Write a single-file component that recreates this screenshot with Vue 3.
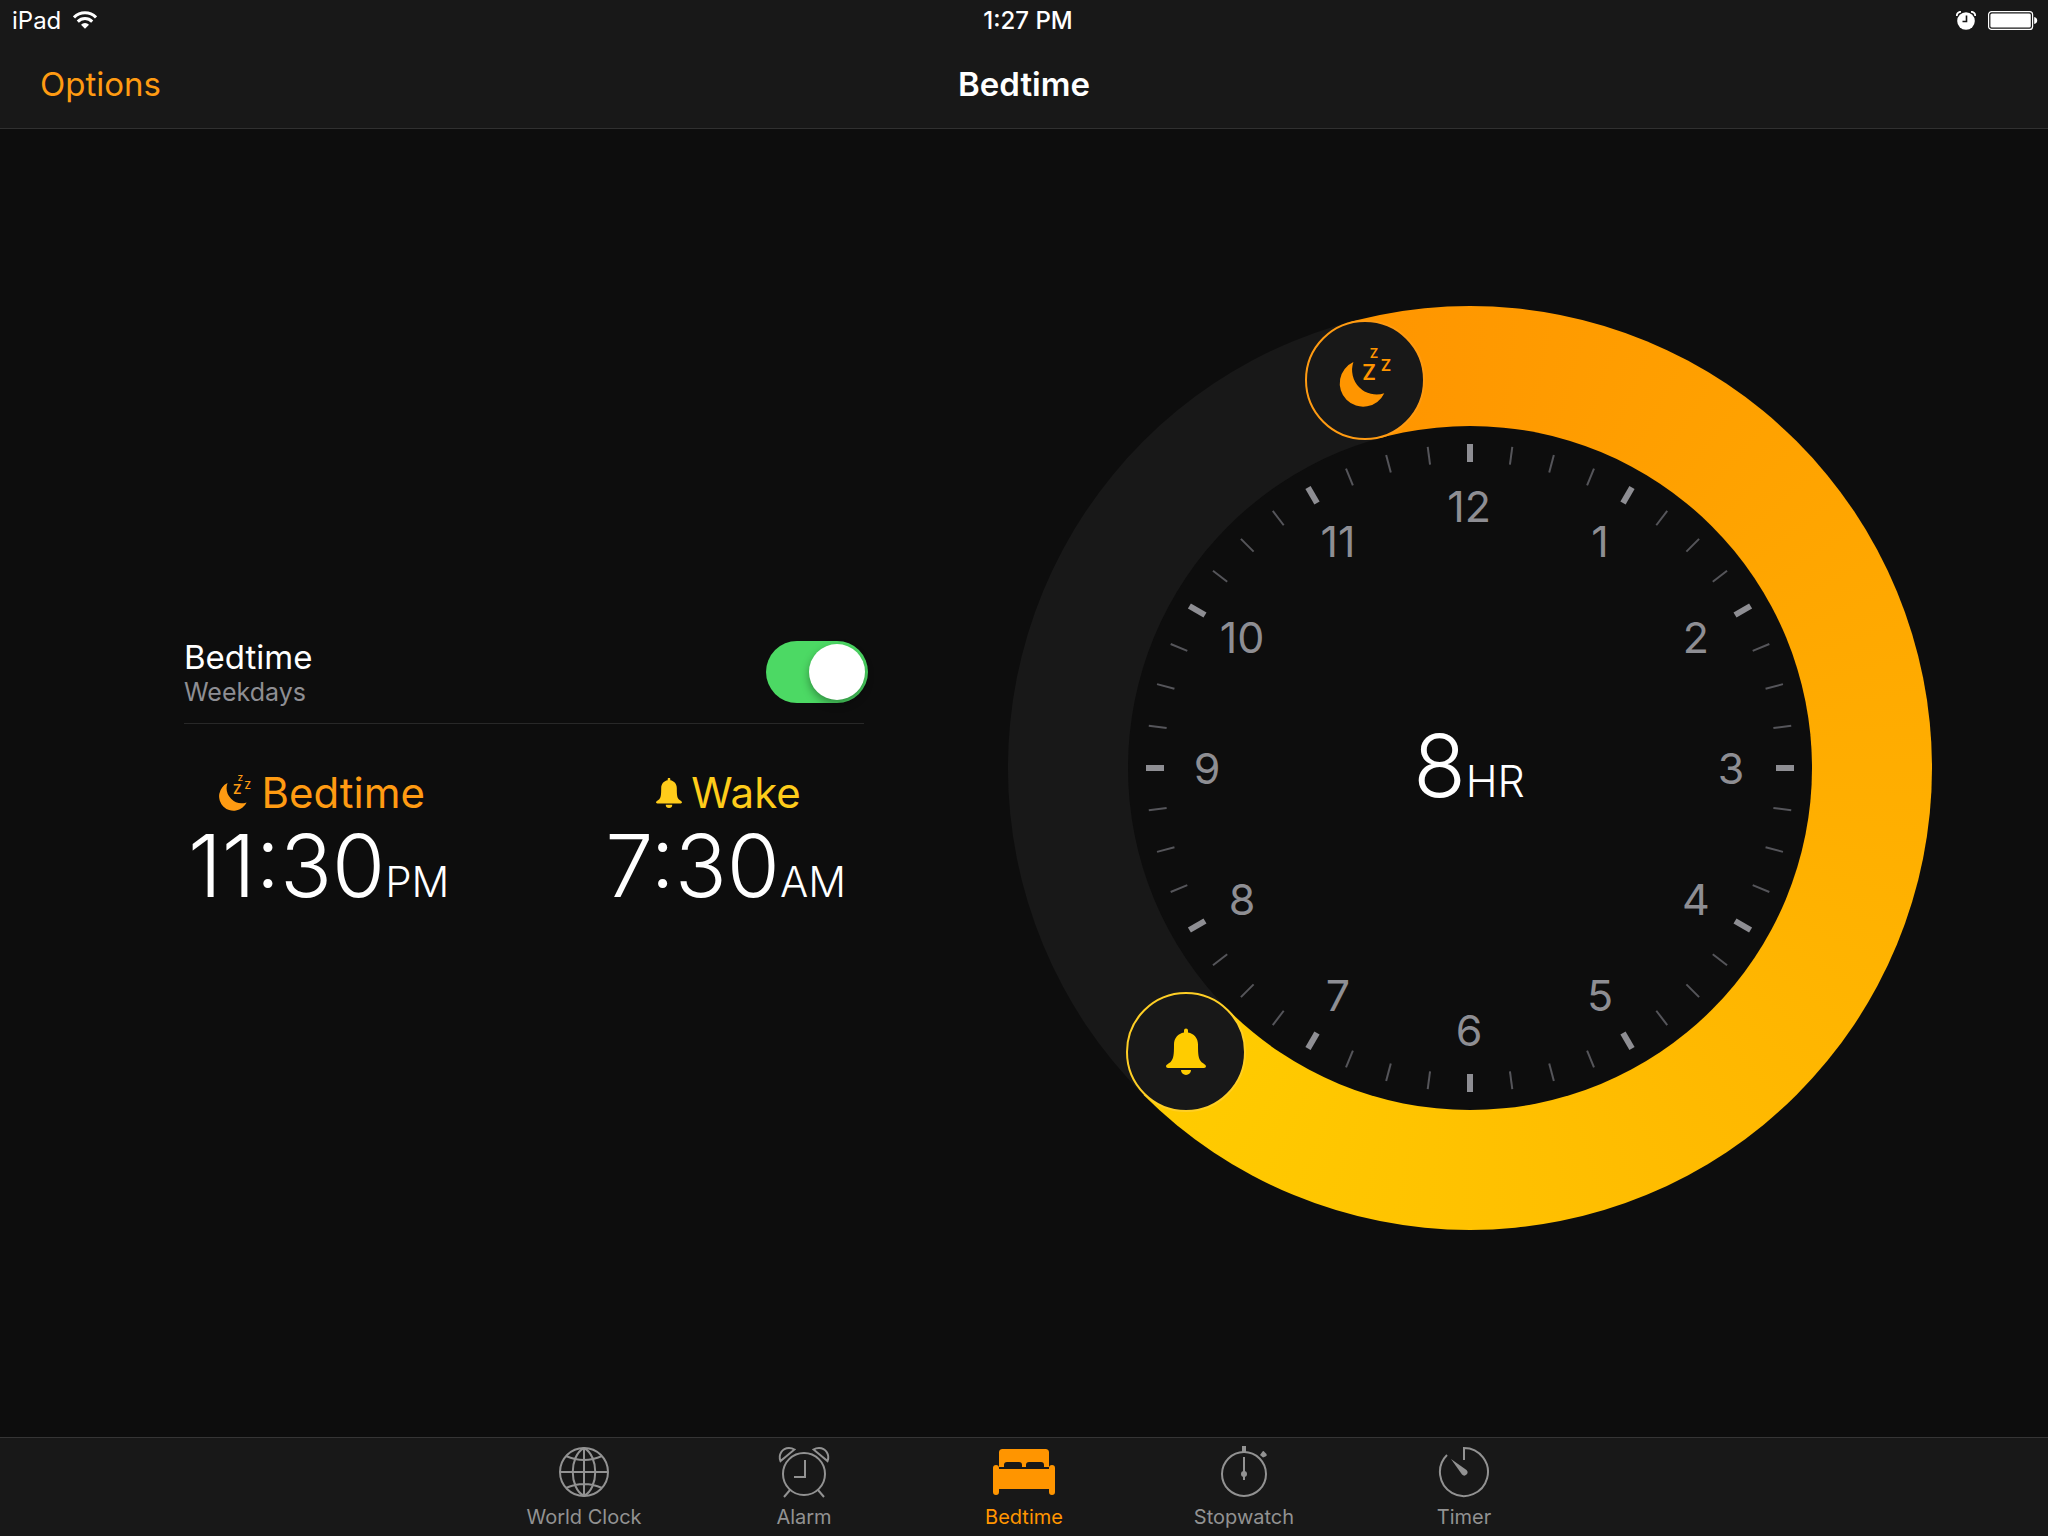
<script setup>
import { ref } from 'vue'

const enabled = ref(true)
const active = ref('bedtime')

const tabs = [
  { id: 'world', label: 'World Clock' },
  { id: 'alarm', label: 'Alarm' },
  { id: 'bedtime', label: 'Bedtime' },
  { id: 'stopwatch', label: 'Stopwatch' },
  { id: 'timer', label: 'Timer' },
]

const ticks = Array.from({ length: 48 }, (_, i) => ({ angle: i * 7.5, hour: i % 4 === 0 }))

const hours = Array.from({ length: 12 }, (_, i) => {
  const a = ((i + 1) * Math.PI) / 6
  return { n: i + 1, x: 262 * Math.sin(a) - 1, y: -262 * Math.cos(a) + 16 }
})

const moon = 'M-11.6 -18A23.4 23.4 0 1 0 19.3 13.3A24.6 24.6 0 0 1 -11.6 -18Z'
const bell =
  'M-2 -19.6V-21.4A2 2 0 0 1 2 -21.4V-19.6C8 -18.6 12 -14 12 -7.5C12 3 12.5 6.5 15 9.5C16.5 11.3 20 12.5 20 14.3Q20 16 18 16H-18Q-20 16 -20 14.3C-20 12.5 -16.5 11.3 -15 9.5C-12.5 6.5 -12 3 -12 -7.5C-12 -14 -8 -18.6 -2 -19.6ZM-5 18H5A5 5 0 0 1 -5 18Z'
</script>

<template>
  <div class="app">
    <header class="top">
      <div class="status">
        <div class="carrier">
          <span>iPad</span>
          <svg width="24" height="18" viewBox="0 0 24 18" fill="none" stroke="#fff" stroke-width="3" aria-hidden="true">
            <path d="M1 6.4A15.6 15.6 0 0 1 23 6.4" />
            <path d="M4.8 10.6A10.2 10.2 0 0 1 19.2 10.6" />
            <path d="M12 17.8L8 13.7A5.6 5.6 0 0 1 16 13.7Z" fill="#fff" stroke="none" />
          </svg>
        </div>
        <span class="clock">1:27 PM</span>
        <div class="indicators">
          <svg width="20" height="19" viewBox="0 0 20 19" aria-hidden="true">
            <circle cx="10" cy="10" r="8.8" fill="#fff" />
            <path d="M.8 5A4 4 0 0 1 5 .8M19.2 5A4 4 0 0 0 15 .8" fill="none" stroke="#fff" stroke-width="1.8" />
            <path d="M10.5 4.5V10.5H6.5" fill="none" stroke="#171717" stroke-width="1.6" />
          </svg>
          <svg width="50" height="19" viewBox="0 0 50 19" aria-hidden="true">
            <rect x=".6" y=".6" width="44" height="17.8" rx="3" fill="none" stroke="#fff" stroke-width="1.2" />
            <rect x="2.4" y="2.4" width="40.4" height="14.2" rx="1.5" fill="#fff" />
            <path d="M46.2 6Q49.2 6.6 49.2 9.5T46.2 13Z" fill="#fff" />
          </svg>
        </div>
      </div>
      <div class="bar">
        <button type="button" class="options">Options</button>
        <h1>Bedtime</h1>
        <span></span>
      </div>
    </header>

    <main class="main">
      <section class="panel">
        <div class="setting">
          <label for="bedtime-switch">
            <span class="name">Bedtime</span>
            <span class="days">Weekdays</span>
          </label>
          <input id="bedtime-switch" v-model="enabled" type="checkbox" role="switch" class="switch" />
        </div>
        <div class="times">
          <div class="time">
            <h2 class="bed">
              <svg width="34" height="38" viewBox="-27 -32 55 60" fill="currentColor" aria-hidden="true">
                <path :d="moon" />
                <g class="zs">
                  <text x="4" y="0" font-size="21">Z</text>
                  <text x="21" y="-9" font-size="16">Z</text>
                  <text x="9" y="-22" font-size="13">Z</text>
                </g>
              </svg>
              Bedtime
            </h2>
            <p>11:30<small>PM</small></p>
          </div>
          <div class="time">
            <h2 class="wake">
              <svg width="26" height="30" viewBox="-20 -23 40 46" fill="currentColor" aria-hidden="true">
                <path :d="bell" />
              </svg>
              Wake
            </h2>
            <p>7:30<small>AM</small></p>
          </div>
        </div>
      </section>

      <section class="dial" aria-label="Sleep schedule">
        <div class="ring"></div>
        <svg class="face" viewBox="-462 -462 924 924">
          <circle r="342" fill="#0d0d0d" />
          <line
            v-for="t in ticks"
            :key="t.angle"
            y1="-324"
            y2="-306"
            :class="t.hour ? 'major' : 'minor'"
            :transform="`rotate(${t.angle})`"
          />
          <text v-for="h in hours" :key="h.n" class="hour" :x="h.x" :y="h.y">{{ h.n }}</text>
          <text class="total" x="-1" y="29">8<tspan class="unit">HR</tspan></text>
          <g transform="translate(-105 -388)">
            <circle r="59" fill="#181818" stroke="#ff9b12" stroke-width="2" />
            <g fill="#ff9500">
              <path :d="moon" />
              <g class="zs">
                <text x="4" y="0" font-size="21">Z</text>
                <text x="21" y="-9" font-size="16">Z</text>
                <text x="9" y="-22" font-size="13">Z</text>
              </g>
            </g>
          </g>
          <g transform="translate(-284 284)">
            <circle r="59" fill="#181818" stroke="#ffcf25" stroke-width="2" />
            <path :d="bell" fill="#ffcc00" />
          </g>
        </svg>
      </section>
    </main>

    <nav class="tabs">
      <button
        v-for="t in tabs"
        :key="t.id"
        type="button"
        :class="['tab', { on: active === t.id }]"
        @click="active = t.id"
      >
        <svg width="64" height="54" viewBox="-32 -27 64 54" fill="none" stroke="currentColor" stroke-width="2" aria-hidden="true">
          <template v-if="t.id === 'world'">
            <circle r="24" />
            <path d="M0 -24V24M-24 0H24M0 -24C-15 -16 -15 16 0 24M0 -24C15 -16 15 16 0 24M-18 -16Q0 -8 18 -16M-18 16Q0 8 18 16" />
          </template>
          <template v-else-if="t.id === 'alarm'">
            <circle cy="2" r="21" />
            <path d="M1 -12V5H-10M-14 18L-20 25M14 18L20 25" />
            <path d="M-23.5 -11C-26 -17 -22 -24 -15 -24Q-12 -24 -9.500 -22.500ZM23.500 -11C26 -17 22 -24 15 -24Q12 -24 9.500 -22.500Z" />
          </template>
          <template v-else-if="t.id === 'bedtime'">
            <g fill="currentColor" stroke="none">
              <path d="M-25 -5V-19.500Q-25 -23 -21.500 -23H21.500Q25 -23 25 -19.500V-5H20V-7Q20 -10 17 -10H5Q2 -10 2 -7V-5H-2V-7Q-2 -10 -5 -10H-17Q-20 -10 -20 -7V-5Z" />
              <path d="M-25 -3H25V-4A3 3 0 0 1 31 -4V20A3 3 0 0 1 25 20V17H-25V20A3 3 0 0 1 -31 20V-4A3 3 0 0 1 -25 -4Z" />
            </g>
          </template>
          <template v-else-if="t.id === 'stopwatch'">
            <circle cy="2" r="22" />
            <path d="M0 -15V8" />
            <circle cy="2" r="3" fill="currentColor" stroke="none" />
            <path d="M-2 -26H2V-20H-2ZM16 -17L18.500 -20.500Q19.500 -21.500 20.500 -20L22.500 -18Q23.500 -16.500 21.500 -15.500L19 -14.500Z" fill="currentColor" stroke="none" />
          </template>
          <template v-else>
            <path d="M0 -12V-24A24 24 0 1 1 -17 -17" />
            <path d="M-13 -13L2.500 -2A3 3 0 0 1 -2 2.500Z" fill="currentColor" stroke="none" />
          </template>
        </svg>
        <span>{{ t.label }}</span>
      </button>
    </nav>
  </div>
</template>

<style>
body {
  margin: 0;
  background: #0d0d0d;
}
</style>

<style scoped>
.app {
  min-height: 100vh;
  display: flex;
  flex-direction: column;
  background: #0d0d0d;
  color: #fff;
  font-family: Inter, "Liberation Sans", sans-serif;
}

button {
  padding: 0;
  border: 0;
  background: none;
  font: inherit;
  color: inherit;
}

h1,
h2,
p {
  margin: 0;
}

.top {
  background: #181818;
  border-bottom: 1px solid #303030;
}

.status {
  display: grid;
  grid-template-columns: 1fr auto 1fr;
  align-items: center;
  height: 40px;
  padding: 0 10px 0 12px;
  font-size: 24px;
}

.carrier,
.indicators {
  display: flex;
  align-items: center;
  gap: 12px;
}

.indicators {
  justify-content: flex-end;
}

.clock {
  font-weight: 500;
  padding-left: 6px;
}

.bar {
  display: grid;
  grid-template-columns: 1fr auto 1fr;
  align-items: center;
  height: 88px;
  padding: 0 40px;
  font-size: 33px;
}

.options {
  justify-self: start;
  color: #ff9b12;
}

h1 {
  font-size: 33px;
  font-weight: 600;
}

.main {
  flex: 1;
  display: grid;
  grid-template-columns: 680fr 924fr;
  align-items: center;
  gap: 144px;
  padding: 0 116px 30px 184px;
}

.panel {
  padding-top: 16px;
}

.setting {
  display: flex;
  justify-content: space-between;
  align-items: flex-start;
  height: 82px;
  border-bottom: 1px solid #282828;
}

.setting label {
  display: flex;
  flex-direction: column;
}

.name {
  font-size: 33px;
  line-height: 32px;
}

.days {
  font-size: 25px;
  line-height: 38px;
  color: #8e8e93;
}

.switch {
  appearance: none;
  box-sizing: border-box;
  width: 102px;
  height: 62px;
  margin: 0 -4px 0 0;
  padding: 3px;
  border-radius: 31px;
  background: #39393d;
}

.switch::before {
  content: "";
  display: block;
  width: 56px;
  height: 56px;
  border-radius: 50%;
  background: #fff;
  box-shadow: 0 4px 8px rgba(0, 0, 0, 0.35);
}

.switch:checked {
  background: #4cd964;
}

.switch:checked::before {
  margin-left: 40px;
}

.times {
  display: flex;
  justify-content: space-between;
  padding: 42px 18px 0 4px;
}

.time {
  display: flex;
  flex-direction: column;
  align-items: center;
}

h2 {
  display: flex;
  align-items: center;
  gap: 9px;
  padding-left: 6px;
  font-size: 42px;
  line-height: 54px;
  font-weight: 400;
}

.bed {
  color: #ff9b12;
}

.wake {
  color: #ffcc1a;
}

.time p {
  font-size: 86px;
  line-height: 92px;
  font-weight: 300;
}

small {
  font-size: 42px;
  line-height: 42px;
}

.dial {
  display: grid;
}

.ring,
.face {
  grid-area: 1 / 1;
  width: 100%;
  aspect-ratio: 1;
}

.ring {
  border-radius: 50%;
  background: conic-gradient(from 345deg, #ff9500 0deg, #ffcc00 240deg, #181818 240deg);
}

.major {
  stroke: #8e8e93;
  stroke-width: 6px;
}

.minor {
  stroke: #55555a;
  stroke-width: 2px;
}

.hour {
  fill: #8e8e93;
  font-size: 43px;
  text-anchor: middle;
}

.total {
  fill: #fff;
  font-size: 86px;
  font-weight: 300;
  text-anchor: middle;
}

.unit {
  font-size: 43px;
}

.zs {
  font-weight: 600;
  text-anchor: middle;
}

.tabs {
  display: flex;
  justify-content: center;
  height: 98px;
  border-top: 1px solid #353535;
  background: #181818;
}

.tab {
  width: 220px;
  display: flex;
  flex-direction: column;
  align-items: center;
  padding-top: 7px;
  font-size: 20px;
  line-height: 37px;
  color: #929292;
}

.tab svg {
  flex: none;
}

.tab.on {
  color: #ff9500;
}
</style>
